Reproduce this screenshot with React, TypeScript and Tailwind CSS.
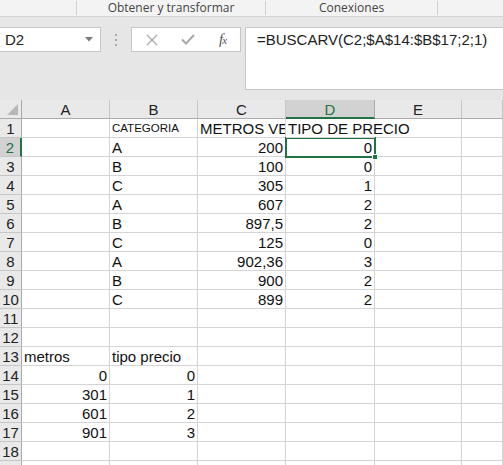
import React from "react";

type Cell = { v: string; r?: boolean; small?: boolean; clip?: boolean; over?: boolean };

const L = (v: string): Cell => ({ v });
const R = (v: string): Cell => ({ v, r: true });
const E: Cell = { v: "" };

const rows: Cell[][] = [
  [E, { v: "CATEGORIA", small: true }, { v: "METROS VE", clip: true }, { v: "TIPO DE PRECIO", over: true }, E, E],
  [E, L("A"), R("200"), R("0"), E, E],
  [E, L("B"), R("100"), R("0"), E, E],
  [E, L("C"), R("305"), R("1"), E, E],
  [E, L("A"), R("607"), R("2"), E, E],
  [E, L("B"), R("897,5"), R("2"), E, E],
  [E, L("C"), R("125"), R("0"), E, E],
  [E, L("A"), R("902,36"), R("3"), E, E],
  [E, L("B"), R("900"), R("2"), E, E],
  [E, L("C"), R("899"), R("2"), E, E],
  [E, E, E, E, E, E],
  [E, E, E, E, E, E],
  [L("metros"), L("tipo precio"), E, E, E, E],
  [R("0"), R("0"), E, E, E, E],
  [R("301"), R("1"), E, E, E, E],
  [R("601"), R("2"), E, E, E, E],
  [R("901"), R("3"), E, E, E, E],
  [E, E, E, E, E, E],
  [E, E, E, E, E, E],
];

const cols = ["A", "B", "C", "D", "E", ""];

export default function App() {
  return (
    <div
      className="w-[503px] h-[465px] overflow-hidden bg-[#e6e6e6] relative"
      style={{ fontFamily: '"Liberation Sans", Arial, sans-serif' }}
    >
      {/* Ribbon group labels */}
      <div
        className="h-[17px] bg-[#f3f3f3] border-b border-[#d5d5d5] flex text-[12px] text-[#444] leading-[16px]"
        style={{ fontFamily: '"Open Sans", "Noto Sans", sans-serif' }}
      >
        <div className="w-[77px] shrink-0 border-r border-[#d0d0d0] my-[1px]" />
        <div className="w-[189px] shrink-0 border-r border-[#d0d0d0] text-center my-[1px] leading-[14px]">
          Obtener y transformar
        </div>
        <div className="w-[172px] shrink-0 border-r border-[#d0d0d0] text-center my-[1px] leading-[14px]">
          Conexiones
        </div>
        <div className="flex-1" />
      </div>

      {/* Formula bar */}
      <div className="h-[83px] pt-[10px] flex items-start">
        <div className="w-[101px] h-[25px] shrink-0 bg-white border border-[#c6c6c6] border-l-0 flex items-center justify-between pl-[5px] pr-[7px]">
          <span className="text-[15px] text-[#222] leading-none">D2</span>
          <svg width="8" height="5" viewBox="0 0 8 5">
            <polygon points="0,0 8,0 4,4.5" fill="#7a7a7a" />
          </svg>
        </div>
        <div className="w-[30px] h-[25px] shrink-0 flex flex-col items-center justify-center gap-[3px]">
          <div className="w-[2px] h-[2px] bg-[#a8a8a8]" />
          <div className="w-[2px] h-[2px] bg-[#a8a8a8]" />
          <div className="w-[2px] h-[2px] bg-[#a8a8a8]" />
        </div>
        <div className="w-[110px] h-[25px] shrink-0 bg-white border border-[#c6c6c6] flex items-center">
          <div className="w-[38px] flex justify-center pl-[2px]">
            <svg width="12" height="12" viewBox="0 0 12 12">
              <path d="M1 1 L11 11 M11 1 L1 11" stroke="#a9a9a9" strokeWidth="1.3" fill="none" />
            </svg>
          </div>
          <div className="w-[36px] flex justify-center">
            <svg width="14" height="11" viewBox="0 0 14 11">
              <path d="M1 5.5 L5 9.5 L13 1" stroke="#a9a9a9" strokeWidth="2" fill="none" />
            </svg>
          </div>
          <div
            className="w-[34px] flex justify-center text-[15px] italic text-[#555] leading-none"
            style={{ fontFamily: '"Liberation Serif", "Times New Roman", serif' }}
          >
            f<span className="text-[11px] -ml-[1px] mt-[3px]">x</span>
          </div>
        </div>
        <div className="w-[4px] shrink-0" />
        <div className="flex-1 h-[63px] bg-white border border-[#c6c6c6] border-r-0 pl-[11px] pt-[3px] text-[15px] text-[#222] leading-[18px]">
          =BUSCARV(C2;$A$14:$B$17;2;1)
        </div>
      </div>

      {/* Sheet grid */}
      <div className="relative">
        <div className="grid grid-cols-[22px_88px_88px_88px_89px_87px_1fr] auto-rows-[19px] bg-white">
          {/* Header row */}
          <div className="bg-[#e9e9e9] border-r border-b border-[#ababab] relative">
            <svg className="absolute right-[3px] bottom-[3px]" width="11" height="11" viewBox="0 0 11 11">
              <polygon points="11,0 11,11 0,11" fill="#b7b7b7" />
            </svg>
          </div>
          {cols.map((c, i) => (
            <div
              key={"h" + i}
              className={
                c === "D"
                  ? "bg-[#d2d2d2] border-r border-[#ababab] border-b-2 border-b-[#217346] text-[#217346] text-[15px] flex items-center justify-center leading-none pt-[1px]"
                  : "bg-[#e9e9e9] border-r border-b border-[#c6c6c6] border-b-[#ababab] text-[#222] text-[15px] flex items-center justify-center leading-none"
              }
            >
              {c}
            </div>
          ))}

          {rows.map((row, ri) => (
            <React.Fragment key={"r" + ri}>
              <div
                className={
                  ri === 1
                    ? "bg-[#d2d2d2] border-r-2 border-r-[#217346] border-b border-[#c6c6c6] text-[#217346] text-[15px] flex items-end justify-center leading-[17px]"
                    : "bg-[#e9e9e9] border-r border-r-[#ababab] border-b border-[#c6c6c6] text-[#222] text-[15px] flex items-end justify-center leading-[17px]"
                }
              >
                {ri + 1}
              </div>
              {row.map((cell, ci) => (
                <div
                  key={"c" + ri + "-" + ci}
                  className={
                    (cell.over ? "border-b " : "border-r border-b ") +
                    "border-[#d4d4d4] flex items-end whitespace-nowrap text-[#111] " +
                    (cell.r ? "justify-end pr-[2px] " : "justify-start pl-[2px] ") +
                    (cell.clip ? "overflow-hidden " : "") +
                    (cell.over ? "overflow-visible relative z-10 " : "") +
                    (cell.small ? "text-[11.5px] leading-[15px] pb-[1px]" : "text-[15px] leading-[17px]")
                  }
                >
                  {cell.v}
                </div>
              ))}
            </React.Fragment>
          ))}
        </div>

        {/* Active cell D2 selection */}
        <div className="absolute left-[285px] top-[37px] w-[91px] h-[21px] border-2 border-[#217346] pointer-events-none" />
        <div className="absolute left-[372px] top-[54px] w-[6px] h-[6px] bg-[#217346] border border-white pointer-events-none" />
      </div>
    </div>
  );
}
